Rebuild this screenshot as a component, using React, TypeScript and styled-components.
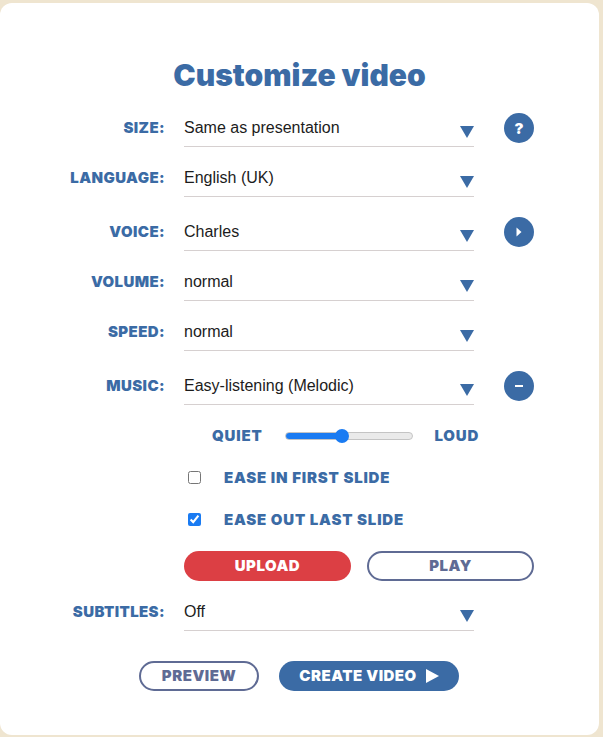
import React from 'react';
import styled, { createGlobalStyle } from 'styled-components';

const BLUE = '#3b6ba5';
const SLATE = '#5f6b94';
const HEADING_FONT = '"Inter", "Liberation Sans", sans-serif';

const GlobalStyle = createGlobalStyle`
  html, body {
    margin: 0;
    padding: 0;
    background: #efe5d0;
  }
`;

const Card = styled.div`
  box-sizing: border-box;
  width: 599px;
  height: 732px;
  margin-top: 3px;
  padding-top: 52px;
  background: #fff;
  border-radius: 12px;
  overflow: hidden;
`;

const Title = styled.h1`
  margin: 0 0 20px;
  height: 40px;
  line-height: 40px;
  text-align: center;
  font-family: ${HEADING_FONT};
  font-weight: 900;
  font-size: 30px;
  color: ${BLUE};
`;

const Row = styled.div<{ $top?: number }>`
  display: flex;
  align-items: flex-start;
  height: 50px;
  margin-top: ${({ $top }) => $top ?? 0}px;
`;

const Label = styled.label`
  flex: none;
  width: 165px;
  margin-right: 19px;
  height: 25px;
  line-height: 25px;
  text-align: right;
  font-family: ${HEADING_FONT};
  font-weight: 900;
  font-size: 15px;
  letter-spacing: 0.4px;
  color: ${BLUE};
`;

const SelectWrap = styled.div`
  position: relative;
  flex: none;
  width: 290px;
  height: 31px;
  border-bottom: 1px solid #d6d0d0;
`;

const Select = styled.select`
  display: block;
  width: 100%;
  height: 25px;
  padding: 0;
  border: 0;
  outline: 0;
  background: transparent;
  appearance: none;
  font-family: "Liberation Sans", Arial, sans-serif;
  font-size: 16px;
  color: #1c1c1c;
`;

const Caret = styled.span`
  position: absolute;
  right: 0;
  top: 11px;
  width: 0;
  height: 0;
  border-left: 7px solid transparent;
  border-right: 7px solid transparent;
  border-top: 12px solid ${BLUE};
  pointer-events: none;
`;

const RoundButton = styled.button`
  flex: none;
  width: 30px;
  height: 30px;
  margin: -2px 0 0 30px;
  padding: 0;
  border: 0;
  border-radius: 50%;
  background: ${BLUE};
  color: #fff;
  display: flex;
  align-items: center;
  justify-content: center;
  font-family: ${HEADING_FONT};
  font-weight: 900;
  font-size: 15px;
`;

const SliderRow = styled.div`
  display: flex;
  align-items: center;
  height: 24px;
  margin: 0 0 0 212px;
`;

const SmallCaps = styled.span`
  font-family: ${HEADING_FONT};
  font-weight: 900;
  font-size: 15px;
  letter-spacing: 0.8px;
  color: ${BLUE};
`;

const Slider = styled.input`
  appearance: none;
  display: block;
  flex: none;
  width: 128px;
  height: 8px;
  margin: 2px 22px 0 22px;
  border: 1px solid #c4c4c4;
  border-radius: 4px;
  box-sizing: border-box;
  background: linear-gradient(to right, #1a7bf2 0 44%, #eaeaea 44% 100%);

  &::-webkit-slider-thumb {
    appearance: none;
    width: 14px;
    height: 14px;
    border-radius: 50%;
    background: #1a7bf2;
  }
`;

const CheckRow = styled.div`
  display: flex;
  align-items: center;
  height: 24px;
  margin: 18px 0 0 188px;
`;

const Check = styled.input`
  flex: none;
  width: 13px;
  height: 13px;
  margin: 0 23px 0 0;
  accent-color: #1a7bf2;
`;

const ButtonRow = styled.div`
  display: flex;
  gap: 16px;
  margin: 20px 0 0 184px;
  width: 350px;
`;

const Pill = styled.button<{ $variant: 'red' | 'outline' | 'blue'; $width: number }>`
  box-sizing: border-box;
  flex: none;
  width: ${({ $width }) => $width}px;
  height: 30px;
  padding: 0 0 1px;
  border-radius: 15px;
  border: ${({ $variant }) => ($variant === 'outline' ? `2px solid ${SLATE}` : '0')};
  background: ${({ $variant }) =>
    $variant === 'red' ? '#dc3f44' : $variant === 'blue' ? BLUE : '#fff'};
  color: ${({ $variant }) => ($variant === 'outline' ? SLATE : '#fff')};
  display: flex;
  align-items: center;
  justify-content: center;
  gap: 9px;
  font-family: ${HEADING_FONT};
  font-weight: 900;
  font-size: 15px;
  letter-spacing: 0.5px;
`;

const FooterRow = styled.div`
  display: flex;
  gap: 20px;
  margin: 12px 0 0 139px;
`;

type FieldProps = { label: string; value: string; top?: number; action?: React.ReactNode };

const Field = ({ label, value, top, action }: FieldProps) => (
  <Row $top={top}>
    <Label>{label}</Label>
    <SelectWrap>
      <Select defaultValue={value}>
        <option>{value}</option>
      </Select>
      <Caret />
    </SelectWrap>
    {action && <RoundButton>{action}</RoundButton>}
  </Row>
);

const App = () => (
  <>
    <GlobalStyle />
    <Card>
      <Title>Customize video</Title>
      <Field label="SIZE:" value="Same as presentation" action="?" />
      <Field label="LANGUAGE:" value="English (UK)" />
      <Field
        label="VOICE:"
        value="Charles"
        top={4}
        action={
          <svg width="8" height="10" viewBox="0 0 8 10">
            <path d="M1.5 0.5 L6.5 5 L1.5 9.5 Z" fill="#fff" />
          </svg>
        }
      />
      <Field label="VOLUME:" value="normal" />
      <Field label="SPEED:" value="normal" />
      <Field
        label="MUSIC:"
        value="Easy-listening (Melodic)"
        top={4}
        action={
          <svg width="8" height="2" viewBox="0 0 8 2">
            <rect width="8" height="2" fill="#fff" />
          </svg>
        }
      />
      <SliderRow>
        <SmallCaps>QUIET</SmallCaps>
        <Slider type="range" min={0} max={100} defaultValue={44} />
        <SmallCaps>LOUD</SmallCaps>
      </SliderRow>
      <CheckRow>
        <Check type="checkbox" />
        <SmallCaps>EASE IN FIRST SLIDE</SmallCaps>
      </CheckRow>
      <CheckRow>
        <Check type="checkbox" defaultChecked />
        <SmallCaps>EASE OUT LAST SLIDE</SmallCaps>
      </CheckRow>
      <ButtonRow>
        <Pill $variant="red" $width={167}>UPLOAD</Pill>
        <Pill $variant="outline" $width={167}>PLAY</Pill>
      </ButtonRow>
      <Field label="SUBTITLES:" value="Off" top={18} />
      <FooterRow>
        <Pill $variant="outline" $width={120}>PREVIEW</Pill>
        <Pill $variant="blue" $width={180}>
          CREATE VIDEO
          <svg width="13" height="14" viewBox="0 0 13 14">
            <path d="M0 0 L13 7 L0 14 Z" fill="#fff" />
          </svg>
        </Pill>
      </FooterRow>
    </Card>
  </>
);

export default App;
